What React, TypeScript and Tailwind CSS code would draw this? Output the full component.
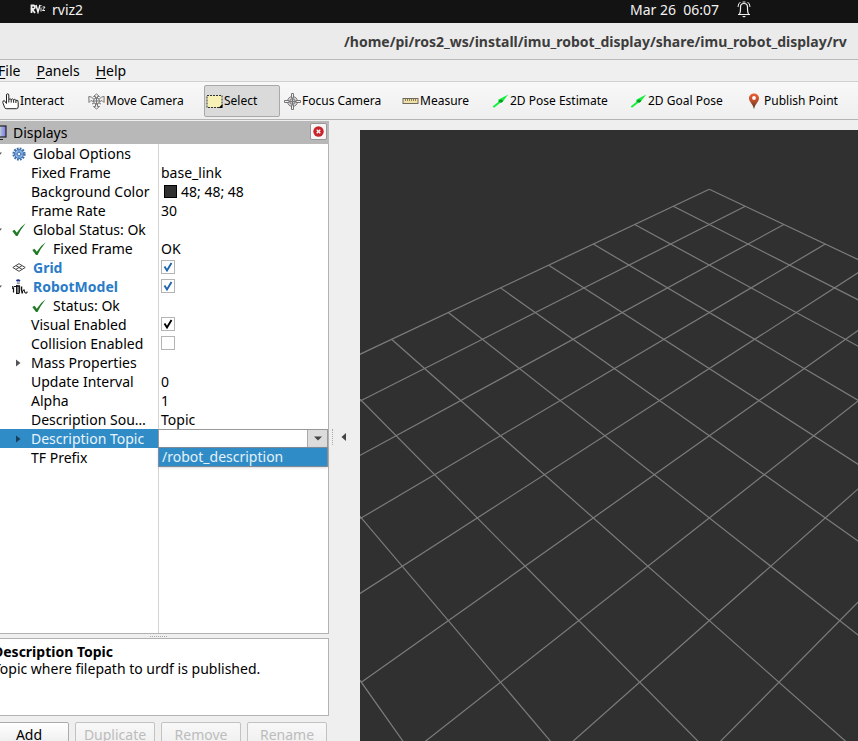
import type { ReactNode } from "react";

/* ---------- icons ---------- */

function HandIcon() {
  return (
    <svg width="17" height="17" viewBox="0 0 17 17" className="shrink-0" fill="#fff" stroke="#222" strokeWidth="1">
      <path d="M4.5 10.5V2Q4.5 .8 5.6.8T6.8 2V6.5Q8.2 5 9.2 6.6Q10.5 5.2 11.6 6.8Q12.8 5.6 13.9 7.3Q16.5 6.5 16.2 9.5V14Q16 15.7 14.5 15.7H4.2Q3 15.6 2.6 14.4L.8 9.5Q.6 7.6 2.3 7.6L4.5 10.5Z" />
      <path d="M6.8 6.5V9.5M9.2 6.6V9.6M11.6 6.8V9.8M13.9 7.3V10" />
    </svg>
  );
}

function MoveIcon() {
  return (
    <svg width="17" height="17" viewBox="0 0 17 17" className="shrink-0" fill="#eee" stroke="#777" strokeWidth="1">
      <path d="M8.5 1L11.5 3.5H9.5V5H7.5V3.5H5.5ZM8.5 16L5.5 13.5H7.5V11H9.5V13.5H11.5Z" />
      <path d="M.8 3.5L3.5 4L5.5 6L7 6.8L5 8.5L3 7.5L1 9.5ZM16.2 3.5L13.5 4L11.5 6L10 6.8L12 8.5L14 7.5L16 9.5Z" />
      <circle cx="8.5" cy="8" r="3" />
      <path d="M5.5 8H11.5M8.5 5V11M4 11L6 10M13 11L11 10" />
    </svg>
  );
}

function SelectIcon() {
  return (
    <svg width="17" height="17" viewBox="0 0 17 17" className="shrink-0">
      <rect x="1" y="2.5" width="15" height="12" fill="#f7f1b5" stroke="#333" strokeDasharray="2 1" />
      <path d="M16.500 11V15H12.500Z" fill="#000" />
    </svg>
  );
}

function FocusIcon() {
  return (
    <svg width="17" height="17" viewBox="0 0 17 17" className="shrink-0" fill="none" stroke="#777">
      <circle cx="8.500" cy="8.500" r="5" fill="#ddd" />
      <circle cx="8.500" cy="8.500" r="2.800" fill="#ccc" />
      <path d="M7.500 .5H9.500V5H7.500ZM7.500 12H9.500V16.500H7.500ZM.5 7.500H5V9.500H.5ZM12 7.500H16.500V9.500H12Z" fill="#eee" />
      <path d="M8.500 5V12M5 8.500H12" />
    </svg>
  );
}

function MeasureIcon() {
  return (
    <svg width="17" height="17" viewBox="0 0 17 17" className="shrink-0">
      <rect x="1" y="5.500" width="15" height="5" fill="#efe0a8" stroke="#6e6a5e" />
      <path d="M3.500 6V8M5.500 6V8M7.500 6V8M9.500 6V8M11.500 6V8M13.500 6V8" stroke="#8c805c" />
    </svg>
  );
}

function ArrowIcon() {
  return (
    <svg width="17" height="17" viewBox="0 0 17 17" className="shrink-0">
      <path d="M.6 13.400L6.500 8.800L6.200 6.800L16.200 1.600L10.500 9L8.500 9.800L2 14.800Z" fill="#14f03c" />
      <path d="M6.800 8.800L9.500 6.800M8.500 9.500L10.800 7.500" stroke="#0a8a20" strokeWidth="1.200" />
    </svg>
  );
}

function PinIcon() {
  return (
    <svg width="17" height="17" viewBox="0 0 17 17" className="shrink-0">
      <defs>
        <linearGradient id="pin" x1="0" y1="0" x2="0" y2="1">
          <stop offset="0" stopColor="#ee6034" />
          <stop offset=".5" stopColor="#b84a2a" />
          <stop offset="1" stopColor="#3f3522" />
        </linearGradient>
      </defs>
      <path d="M8 .5C5 .5 3 2.700 3 5.300C3 9 6.800 10.500 8 16.300C9.200 10.500 13 9 13 5.300C13 2.700 11 .5 8 .5Z" fill="url(#pin)" />
      <circle cx="8" cy="5" r="1.900" fill="#fff" />
    </svg>
  );
}

function RvizLogo() {
  return (
    <svg width="16" height="10" viewBox="0 0 16 10" fill="none" stroke="#eee" className="shrink-0">
      <path d="M1.500 9V1.500H3.500Q5 1.500 5 3T3.500 5H2L5 9" strokeWidth="1.800" />
      <path d="M6 1L8 8L10 1" strokeWidth="1.500" />
      <path d="M11 3.500V7.500M12.500 3H15L12.500 6.500H15M11 1V2" strokeWidth="1" />
    </svg>
  );
}

function BellIcon() {
  return (
    <svg width="14" height="17" viewBox="0 0 14 17" fill="none" stroke="#f2f2f2" className="shrink-0">
      <path d="M1 13.500H13M2.500 13Q3.500 11 3.500 8V6Q3.500 2.500 7 2.500T10.500 6V8Q10.500 11 11.500 13" strokeWidth="1.200" />
      <path d="M3.500 1Q1 2.500 1 6M10.500 1Q13 2.500 13 6M5.500 1H8.500" />
      <path d="M5 15H9L7 16.500Z" fill="#f2f2f2" stroke="none" />
    </svg>
  );
}

function GearIcon() {
  return (
    <svg width="14" height="14" viewBox="0 0 14 14" className="shrink-0">
      <circle cx="7" cy="7" r="5.500" fill="none" stroke="#3c6ca8" strokeWidth="2.200" strokeDasharray="1.800 1.080" />
      <circle cx="7" cy="7" r="4.500" fill="#8db4e6" stroke="#4577b5" />
      <circle cx="7" cy="7" r="1.800" fill="#e8f0fa" stroke="#4577b5" />
      <path d="M7 2.500V5M7 9V11.500M2.500 7H5M9 7H11.500" stroke="#4577b5" strokeWidth=".7" />
    </svg>
  );
}

function StatusCheck() {
  return (
    <svg width="14" height="14" viewBox="0 0 14 14" className="shrink-0">
      <path d="M.3 8L2.500 6.800L4.800 9.800Q8 4 13.700 .3Q8.700 6.500 5.500 13H4Z" fill="#1f7a24" />
    </svg>
  );
}

function GridIcon() {
  return (
    <svg width="14" height="14" viewBox="0 0 14 14" className="shrink-0" fill="none" stroke="#444">
      <path d="M.8 6.500L7 2.700L13.200 6.500L7 10.300ZM3.900 4.600L10.100 8.400M10.100 4.600L3.900 8.400" />
    </svg>
  );
}

function RobotIcon() {
  return (
    <svg width="16" height="16" viewBox="0 0 16 16" className="shrink-0" fill="none" stroke="#111">
      <path d="M4.500 2Q6 .6 8 2" stroke="#1d2f8f" strokeWidth="1.800" />
      <path d="M4.800 4.200H7.800" stroke="#999" strokeWidth="1.800" />
      <path d="M.8 7V10M1.500 8.500V13.500M2 7.500H4" strokeWidth="1.200" />
      <path d="M4.800 6V14M7.200 6.500V14.500M4 7H8M9.500 7.500V11L10.500 14.500" strokeWidth="1.500" />
      <path d="M4 14.500H7M10 13.500L12 10.500L13 14H15V12.500" />
    </svg>
  );
}

function MonitorIcon() {
  return (
    <svg width="16" height="16" viewBox="0 0 16 16" className="shrink-0">
      <defs>
        <linearGradient id="screen">
          <stop offset="0" stopColor="#e88" />
          <stop offset=".55" stopColor="#a6e6a6" />
          <stop offset=".7" stopColor="#a9a4ee" />
          <stop offset="1" stopColor="#7d78d8" />
        </linearGradient>
      </defs>
      <rect x="1" y="1" width="14" height="11" fill="url(#screen)" stroke="#222" strokeWidth="1.200" />
      <path d="M8 12V14M4 14.500H12" stroke="#222" />
    </svg>
  );
}

function Expander({ open }: { open?: boolean }) {
  return (
    <svg width="7" height="8" viewBox="0 0 7 8" className="shrink-0" fill="currentColor">
      <path d={open ? "M0 2.500H6L3 6Z" : "M2 .5V7.500L6.500 4Z"} />
    </svg>
  );
}

/* ---------- toolbar ---------- */

function Tool({ icon, width, active, children }: { icon: ReactNode; width: string; active?: boolean; children: ReactNode }) {
  return (
    <button
      type="button"
      className={`flex h-8 shrink-0 items-center gap-px rounded-xs border pl-px text-left whitespace-nowrap ${width} ${
        active ? "border-[#a9a9a9] bg-[#dadada]" : "border-transparent"
      }`}
    >
      {icon}
      {children}
    </button>
  );
}

/* ---------- property tree ---------- */

type Row = {
  id: string;
  name: string;
  indent: string;
  icon?: ReactNode;
  expander?: "open" | "closed";
  bold?: boolean;
  value?: ReactNode;
  check?: "blue" | "black" | "empty";
};

const rows: Row[] = [
  { id: "global-options", name: "Global Options", indent: "pl-3", icon: <GearIcon />, expander: "open" },
  { id: "fixed-frame", name: "Fixed Frame", indent: "pl-[31px]", value: "base_link" },
  {
    id: "background",
    name: "Background Color",
    indent: "pl-[31px]",
    value: (
      <span className="flex items-center gap-1 pl-[3px]">
        <span className="size-[13px] border border-black bg-[#303030]" />
        48; 48; 48
      </span>
    ),
  },
  { id: "frame-rate", name: "Frame Rate", indent: "pl-[31px]", value: "30" },
  { id: "global-status", name: "Global Status: Ok", indent: "pl-3", icon: <StatusCheck />, expander: "open" },
  { id: "status-frame", name: "Fixed Frame", indent: "pl-8", icon: <StatusCheck />, value: "OK" },
  { id: "grid", name: "Grid", indent: "pl-3", icon: <GridIcon />, bold: true, check: "blue" },
  { id: "robot-model", name: "RobotModel", indent: "pl-3", icon: <RobotIcon />, expander: "open", bold: true, check: "blue" },
  { id: "status", name: "Status: Ok", indent: "pl-8", icon: <StatusCheck /> },
  { id: "visual", name: "Visual Enabled", indent: "pl-[31px]", check: "black" },
  { id: "collision", name: "Collision Enabled", indent: "pl-[31px]", check: "empty" },
  { id: "mass", name: "Mass Properties", indent: "pl-[31px]", expander: "closed" },
  { id: "update", name: "Update Interval", indent: "pl-[31px]", value: "0" },
  { id: "alpha", name: "Alpha", indent: "pl-[31px]", value: "1" },
  { id: "source", name: "Description Sou…", indent: "pl-[31px]", value: "Topic" },
  { id: "topic", name: "Description Topic", indent: "pl-[31px]", expander: "closed" },
  { id: "tf-prefix", name: "TF Prefix", indent: "pl-[31px]" },
];

function CheckField({ id, kind }: { id: string; kind: "blue" | "black" | "empty" }) {
  return (
    <span className="flex h-[19px] items-start pt-0.5">
      <span className="relative block size-3.5">
        <input
          id={id}
          type="checkbox"
          defaultChecked={kind !== "empty"}
          className="block size-3.5 appearance-none border border-[#b4b4b4] bg-white"
        />
        {kind !== "empty" && (
          <svg
            viewBox="0 0 14 14"
            className={`pointer-events-none absolute inset-0 size-3.5 ${kind === "blue" ? "text-[#1f66ad]" : "text-black"}`}
            fill="none"
            stroke="currentColor"
            strokeWidth="1.900"
          >
            <path d="M3.500 6.500L6 10.500L10.500 3" />
          </svg>
        )}
      </span>
    </span>
  );
}

function TopicField({ id }: { id: string }) {
  return (
    <div className="relative -ml-[3px]">
      <select id={id} className="block h-[19px] w-full appearance-none border border-[#999] bg-white px-1">
        <option></option>
        <option>/robot_description</option>
      </select>
      <span className="pointer-events-none absolute inset-y-px right-px flex w-5 items-center justify-center border-l border-[#aaa] bg-[#dcdcdc]">
        <svg width="8" height="5" viewBox="0 0 8 5" fill="#444">
          <path d="M0 .5H8L4 4.500Z" />
        </svg>
      </span>
      <div className="absolute inset-x-0 top-[18px] z-10 h-5 border border-[#7d8c98] bg-[#308cc6] pl-[3px] leading-[18px] text-[#e4f1fa] shadow-sm">
        /robot_description
      </div>
    </div>
  );
}

function PropertyRow({ row }: { row: Row }) {
  const selected = row.id === "topic";
  return (
    <tr className="h-[19px]">
      <td className={`border-r p-0 ${selected ? "border-[#308cc6] bg-[#308cc6] text-[#e8f4fc]" : "border-[#d4d4d4]"}`}>
        <div className={`relative flex h-[19px] items-center ${row.indent}`}>
          {row.expander && (
            <span
              className={`absolute inset-y-0 flex items-center ${row.expander === "open" ? "-left-1" : "left-3.5"} ${
                selected ? "text-[#173f5c]" : "text-[#555]"
              }`}
            >
              <Expander open={row.expander === "open"} />
            </span>
          )}
          {row.icon && <span className="flex w-[21px] shrink-0">{row.icon}</span>}
          <label htmlFor={row.id} className={`whitespace-nowrap ${row.bold ? "font-bold text-[#2a7bc8]" : ""}`}>
            {row.name}
          </label>
        </div>
      </td>
      <td className="p-0 pl-0.5">
        {row.check ? <CheckField id={row.id} kind={row.check} /> : selected ? <TopicField id={row.id} /> : row.value}
      </td>
    </tr>
  );
}

/* ---------- 3D view: a 10 x 10 ground grid in perspective ---------- */

const CELLS = 10;

function project(i: number, j: number) {
  const w = 1 - (i + j) / 30;
  return { x: 349.3 + ((i - j) * 34.8) / w, y: (189.3 + 10.12 * (i + j)) / w - 130 };
}

function GroundGrid() {
  const lines = Array.from({ length: CELLS + 1 }, (_, n) => [
    [project(n, 0), project(n, CELLS)],
    [project(0, n), project(CELLS, n)],
  ]).flat();
  return (
    <svg className="size-full" stroke="#7c7c7c" strokeWidth="1.200">
      {lines.map(([a, b], n) => (
        <line key={n} x1={a.x} y1={a.y} x2={b.x} y2={b.y} />
      ))}
    </svg>
  );
}

function PanelButton({ children, disabled }: { children: ReactNode; disabled?: boolean }) {
  return (
    <button
      type="button"
      disabled={disabled}
      className="h-[25px] w-20 shrink-0 rounded-xs border border-[#ababab] bg-linear-to-b from-white to-[#ececec] disabled:border-[#c2c2c2] disabled:from-[#f8f8f8] disabled:to-[#efefef] disabled:text-[#bcbcbc]"
    >
      {children}
    </button>
  );
}

export default function App() {
  return (
    <div className="flex h-screen flex-col overflow-hidden bg-[#efefef] font-['Noto_Sans',sans-serif] text-sm leading-[19px] text-black">
      <header className="flex h-[23px] shrink-0 items-start bg-[#131313] pr-[107px] pl-[30px] text-[#f2f2f2]">
        <div className="flex h-[18px] flex-1 items-center gap-1.5">
          <RvizLogo />
          rviz2
        </div>
        <div className="flex h-[18px] items-center gap-[18px]">
          <span className="whitespace-pre">Mar 26  06:07</span>
          <BellIcon />
        </div>
      </header>

      <div className="flex h-[37px] shrink-0 items-center border-b border-[#b9b9b9] bg-[#ebebeb] pl-[344px] font-bold whitespace-nowrap text-[#3d3d3d]">
        /home/pi/ros2_ws/install/imu_robot_display/share/imu_robot_display/rv
      </div>

      <nav className="-ml-0.5 flex h-[22px] shrink-0 items-center gap-4 border-b border-[#d0d0d0]">
        <button type="button"><u className="underline-offset-2">F</u>ile</button>
        <button type="button"><u className="underline-offset-2">P</u>anels</button>
        <button type="button"><u className="underline-offset-2">H</u>elp</button>
      </nav>

      <div className="flex h-[38px] shrink-0 items-center border-b border-[#b4b4b4] bg-linear-to-b from-[#f8f8f8] to-[#efefef] pt-px text-xs">
        <Tool icon={<HandIcon />} width="w-[86px]">Interact</Tool>
        <Tool icon={<MoveIcon />} width="w-[118px]">Move Camera</Tool>
        <Tool icon={<SelectIcon />} width="w-[76px]" active>Select</Tool>
        <Tool icon={<FocusIcon />} width="ml-0.5 w-[118px]">Focus Camera</Tool>
        <Tool icon={<MeasureIcon />} width="w-[90px]">Measure</Tool>
        <Tool icon={<ArrowIcon />} width="w-[138px]">2D Pose Estimate</Tool>
        <Tool icon={<ArrowIcon />} width="w-[116px]">2D Goal Pose</Tool>
        <Tool icon={<PinIcon />} width="w-[100px]">Publish Point</Tool>
      </div>

      <main className="flex min-h-0 flex-1 pt-px">
        <aside className="flex w-[329px] shrink-0 flex-col">
          <div className="-ml-[9px] flex h-[23px] shrink-0 items-center gap-1.5 bg-[#b8b8b8] pr-0.5">
            <MonitorIcon />
            <h2 className="flex-1">Displays</h2>
            <button
              type="button"
              aria-label="Close"
              className="mb-0.5 flex size-[17px] items-center justify-center rounded-xs border border-[#999] bg-[#f6f6f6]"
            >
              <svg width="11" height="11" viewBox="0 0 11 11">
                <circle cx="5.500" cy="5.500" r="5.200" fill="#c9242b" />
                <path d="M3.700 3.700L7.300 7.300M7.300 3.700L3.700 7.300" stroke="#fff" strokeWidth="1.300" />
              </svg>
            </button>
          </div>

          <div className="flex min-h-0 flex-1 flex-col border-r border-b border-[#b2b2b2] bg-white">
            <table className="w-full table-fixed border-separate border-spacing-0">
              <colgroup>
                <col className="w-[159px]" />
                <col />
              </colgroup>
              <tbody>
                {rows.map((row) => (
                  <PropertyRow key={row.id} row={row} />
                ))}
              </tbody>
            </table>
            <div className="w-[159px] flex-1 border-r border-[#d4d4d4]" />
          </div>

          <div className="flex h-1 shrink-0 items-center pl-[150px]">
            <span className="w-[17px] border-t border-dotted border-[#aaa]" />
          </div>

          <div className="-ml-2 h-[78px] shrink-0 border border-[#b2b2b2] bg-white pt-1 leading-[17px]">
            <p className="font-bold">Description Topic</p>
            <p>Topic where filepath to urdf is published.</p>
          </div>

          <div className="-ml-[11px] flex h-[25px] shrink-0 gap-1.5 overflow-hidden pt-1.5">
            <PanelButton>Add</PanelButton>
            <PanelButton disabled>Duplicate</PanelButton>
            <PanelButton disabled>Remove</PanelButton>
            <PanelButton disabled>Rename</PanelButton>
          </div>
        </aside>

        <div className="flex w-[31px] shrink-0 items-center gap-2 pt-[11px] pl-[3px]">
          <span className="h-4 border-l border-dotted border-[#aaa]" />
          <button type="button" aria-label="Collapse panel">
            <svg width="5" height="8" viewBox="0 0 5 8" fill="#444">
              <path d="M5 0V8L.5 4Z" />
            </svg>
          </button>
        </div>

        <section className="mt-[9px] min-w-0 flex-1 overflow-hidden bg-[#303030]" aria-label="3D view">
          <GroundGrid />
        </section>
      </main>
    </div>
  );
}
